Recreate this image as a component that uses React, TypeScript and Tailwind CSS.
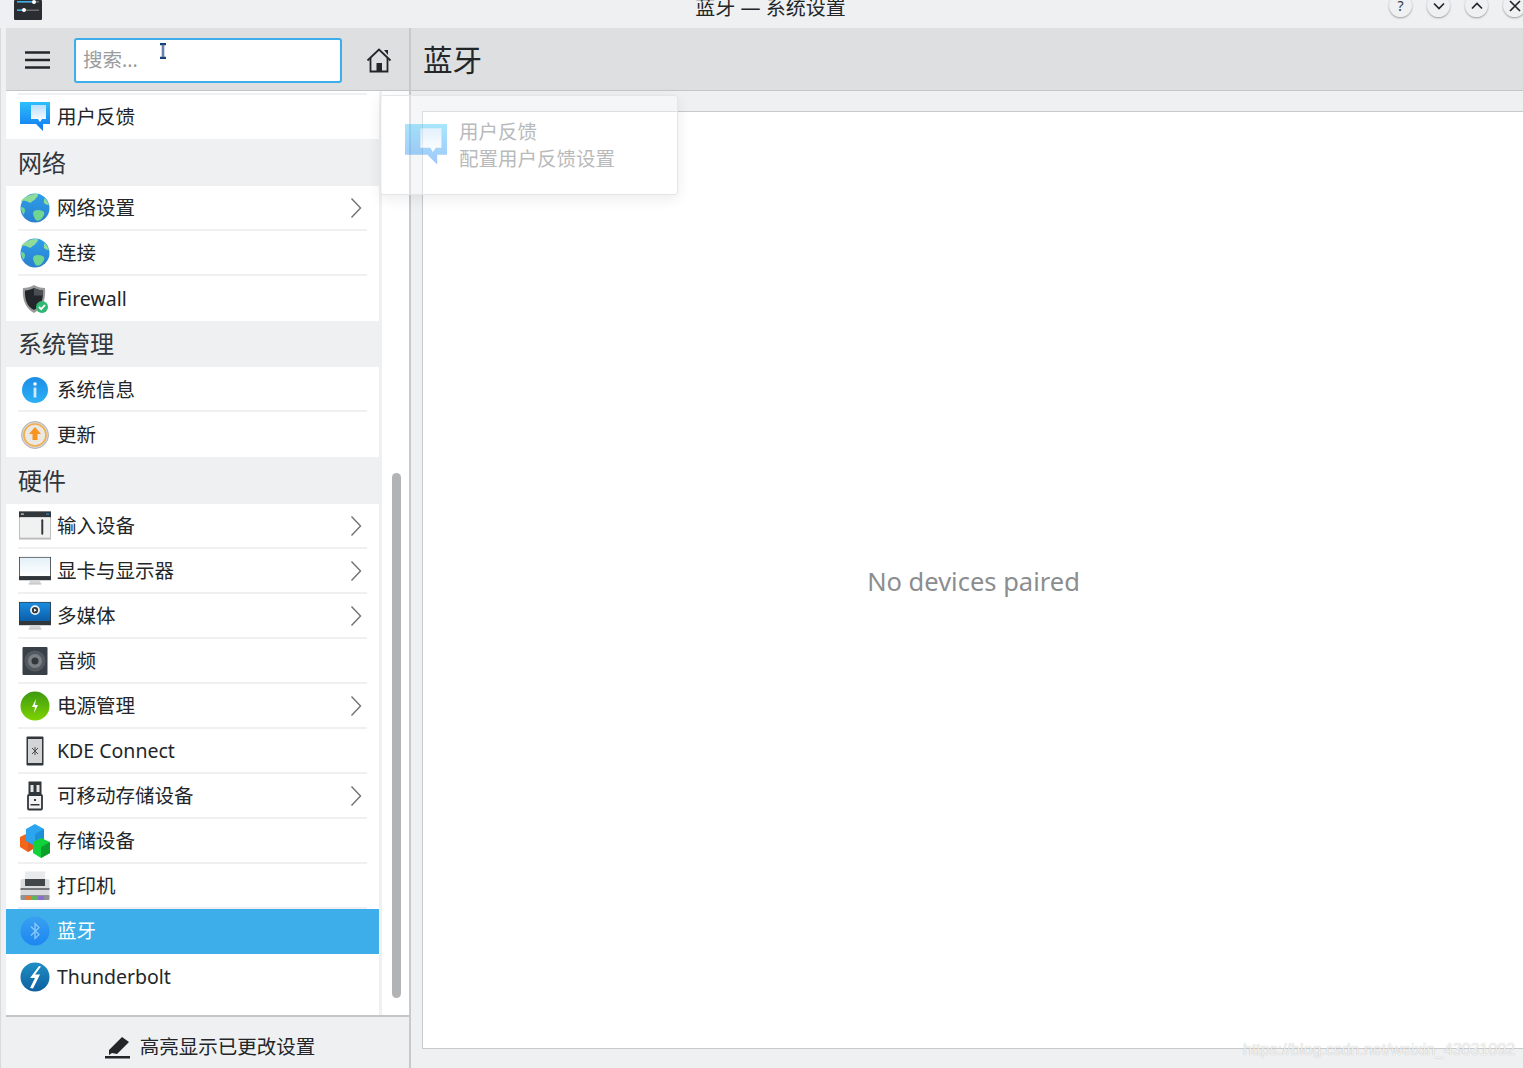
import { FC, ReactNode } from "react";

const font = { fontFamily: '"Noto Sans", "Noto Sans CJK SC", sans-serif' };

const GlobeIcon = () => (
  <svg width="30" height="30" viewBox="0 0 30 30">
    <defs>
      <linearGradient id="sea" x1="0" y1="0" x2="0" y2="1">
        <stop offset="0" stopColor="#2d9ee8" />
        <stop offset="1" stopColor="#2a7fd0" />
      </linearGradient>
    </defs>
    <circle cx="15" cy="15" r="14.5" fill="url(#sea)" />
    <path d="M7 3.5c3-2 8-3 11-2 .5 2-2 3-3 5-1 1.500-3 1-4 3-1.500 1-3-1-5-1.500-2-.5-4-.5-5 1C1.500 6 4 5 7 3.500z" fill="#8fdc9a" />
    <path d="M14 18c3-2 8-1 10 1 1 2-1 6-4 8-2 1-4 1-5-1-1-3-3-5-1-8z" fill="#6ed690" />
    <path d="M1 14c2 0 4 1 4 3s-1 3-1 5c-2-2-3-5-3-8z" fill="#6ed690" />
    <path d="M24 5c2 1 4 4 5 7-2 0-4-1-5-2-1-2 1-3 0-5z" fill="#8fdc9a" />
  </svg>
);

const FeedbackIcon = () => (
  <svg width="30" height="30" viewBox="0 0 30 30">
    <defs>
      <linearGradient id="fb" x1="0" y1="0" x2="0" y2="1">
        <stop offset="0" stopColor="#2bc0fb" />
        <stop offset="1" stopColor="#1277f0" />
      </linearGradient>
      <linearGradient id="fbi" x1="0" y1="0" x2="0" y2="1">
        <stop offset="0" stopColor="#b9ddfb" />
        <stop offset="1" stopColor="#ffffff" />
      </linearGradient>
    </defs>
    <path d="M0 0h30v22H23v7l-7-7H0z" fill="url(#fb)" />
    <path d="M11 3h15v14h-4l-2 3-2-3h-7z" fill="url(#fbi)" />
  </svg>
);

const ShieldIcon = () => (
  <svg width="30" height="30" viewBox="0 0 30 30">
    <path d="M14 1c3 2 7 3 11 3 1 11-2 20-11 25C5 24 2 15 3 4c4 0 8-1 11-3z" fill="#9a9a9a" />
    <path d="M14 4c3 1.500 6 2.500 9 2.500.5 9-2 16-9 19.500C7 22.500 4.500 15.500 5 6.500 8 6.500 11 5.500 14 4z" fill="#23272b" />
    <path d="M14 4c3 1.500 6 2.500 9 2.500l-.1 5H14z" fill="#4a4f54" />
    <circle cx="22" cy="23" r="6" fill="#2eb872" />
    <path d="M19 23l2.200 2.200L25 21" fill="none" stroke="#fff" strokeWidth="1.800" />
  </svg>
);

const InfoIcon = () => (
  <svg width="30" height="30" viewBox="0 0 30 30">
    <defs>
      <linearGradient id="inf" x1="0" y1="0" x2="0" y2="1">
        <stop offset="0" stopColor="#1c8ee8" />
        <stop offset="1" stopColor="#2cb0f5" />
      </linearGradient>
    </defs>
    <circle cx="15" cy="15" r="13" fill="url(#inf)" />
    <circle cx="15" cy="9" r="1.800" fill="#fff" />
    <rect x="13.600" y="12.500" width="2.800" height="10" rx="0.500" fill="#cfeafc" />
  </svg>
);

const UpdateIcon = () => (
  <svg width="30" height="30" viewBox="0 0 30 30">
    <circle cx="15" cy="15" r="13.500" fill="#d5d5d3" stroke="#b4b4b2" strokeWidth="1" />
    <circle cx="15" cy="15" r="11" fill="#e9e8e2" stroke="#f5ad4d" strokeWidth="1.600" />
    <path d="M15 7l6 7h-3.500v6h-5v-6H9z" fill="#f7931e" />
  </svg>
);

const TabletIcon = () => (
  <svg width="33" height="30" viewBox="0 0 33 30">
    <rect x="0" y="0" width="33" height="29" fill="#bcbcbc" />
    <rect x="0" y="0" width="33" height="6" fill="#31363b" />
    <rect x="2" y="2" width="3" height="1.500" fill="#b8bcc0" />
    <rect x="28" y="2" width="3" height="1.500" fill="#2a80c8" />
    <rect x="1" y="6" width="31" height="21" fill="#f0f1f1" />
    <rect x="23" y="8" width="2" height="16" rx="1" fill="#31363b" />
  </svg>
);

const MonitorIcon: FC<{ media?: boolean }> = ({ media }) => (
  <svg width="33" height="30" viewBox="0 0 33 30">
    <defs>
      <linearGradient id="scr" x1="0" y1="0" x2="0" y2="1">
        <stop offset="0" stopColor="#e3f0f7" />
        <stop offset="1" stopColor="#ffffff" />
      </linearGradient>
      <linearGradient id="scm" x1="0" y1="0" x2="0" y2="1">
        <stop offset="0" stopColor="#1a8de0" />
        <stop offset="1" stopColor="#0c5da8" />
      </linearGradient>
    </defs>
    <rect x="0" y="0.500" width="33" height="24" fill="#31363b" />
    <rect x="0.800" y="1.200" width="31.400" height="19" fill={media ? "url(#scm)" : "url(#scr)"} />
    <rect x="11" y="24.500" width="11" height="3" fill="#d5d6d7" />
    <rect x="10" y="27.500" width="13" height="1.500" fill="#c4c5c6" />
    {media && (
      <>
        <circle cx="16.500" cy="9" r="5" fill="#f3f4f5" />
        <circle cx="16.500" cy="9" r="3.200" fill="#31363b" />
        <path d="M15.500 7.300l2.800 1.700-2.800 1.700z" fill="#fff" />
      </>
    )}
  </svg>
);

const AudioIcon = () => (
  <svg width="30" height="30" viewBox="0 0 30 30">
    <rect x="2.500" y="1" width="25" height="28" rx="1" fill="#3a4047" />
    <circle cx="15" cy="15" r="10.500" fill="#54595f" />
    <circle cx="15" cy="15" r="7" fill="#7a7f84" />
    <circle cx="15" cy="15" r="3.500" fill="#33383d" />
  </svg>
);

const PowerIcon = () => (
  <svg width="30" height="30" viewBox="0 0 30 30">
    <defs>
      <linearGradient id="pw" x1="0" y1="0" x2="0" y2="1">
        <stop offset="0" stopColor="#3c9a10" />
        <stop offset="1" stopColor="#7fd300" />
      </linearGradient>
    </defs>
    <circle cx="15" cy="15" r="14.500" fill="url(#pw)" />
    <path d="M16 8l-4 8h3l-1 6 4-8h-3z" fill="#fff" />
  </svg>
);

const PhoneIcon = () => (
  <svg width="30" height="30" viewBox="0 0 30 30">
    <rect x="6.500" y="0.500" width="17" height="29" rx="1" fill="#31363b" />
    <rect x="8" y="3" width="14" height="24" fill="#d2d4d5" />
    <path d="M12 12l3 3-3 3M15 11v8M18 12l-3 3 3 3" fill="none" stroke="#4d4d4d" strokeWidth="1" />
  </svg>
);

const UsbIcon = () => (
  <svg width="30" height="30" viewBox="0 0 30 30">
    <rect x="8.500" y="0.500" width="13" height="14" fill="#31363b" />
    <rect x="10.500" y="4" width="3" height="7" fill="#e5e5e5" />
    <rect x="16.500" y="4" width="3" height="7" fill="#e5e5e5" />
    <rect x="8" y="14" width="14" height="14.500" rx="1" fill="#f2f2f2" stroke="#31363b" strokeWidth="1.800" />
    <rect x="14" y="18" width="2" height="2" fill="#31363b" />
    <rect x="10.500" y="23" width="9" height="1.500" fill="#31363b" />
  </svg>
);

const CubesIcon = () => (
  <svg width="30" height="34" viewBox="0 0 30 34">
    <path d="M8 9l8 4v10l-8 5-8-5V13z" fill="#f2661c" />
    <path d="M8 9l8 4v10l-8 5z" fill="#e4571a" />
    <path d="M6 5l9-5 9 5v12l-9 5-9-5z" fill="#2ba6ee" />
    <path d="M15 10l9-5v12l-9 5z" fill="#1c8fd8" />
    <path d="M13 18l8-4 9 4v11l-9 5-8-5z" fill="#12d23c" />
    <path d="M21 23l9-5v11l-9 5z" fill="#0ba02c" />
  </svg>
);

const PrinterIcon = () => (
  <svg width="30" height="30" viewBox="0 0 30 30">
    <rect x="5" y="0.500" width="20" height="11" fill="#e8eaeb" />
    <rect x="0.500" y="8" width="29" height="19" rx="2" fill="#d8dadb" />
    <rect x="5" y="8" width="20" height="7" fill="#41464b" />
    <rect x="0.500" y="17" width="29" height="2" fill="#74787b" />
    <rect x="0.500" y="24" width="29" height="5" rx="1" fill="#8f9396" />
    <rect x="6" y="25" width="6" height="4" fill="#e07a3c" />
    <rect x="12" y="25" width="6" height="4" fill="#5fb35a" />
    <rect x="18" y="25" width="6" height="4" fill="#8b6fd0" />
  </svg>
);

const BluetoothIcon = () => (
  <svg width="30" height="30" viewBox="0 0 30 30">
    <defs>
      <linearGradient id="bt" x1="0" y1="0" x2="0" y2="1">
        <stop offset="0" stopColor="#3aa0f0" />
        <stop offset="1" stopColor="#1c86f2" />
      </linearGradient>
    </defs>
    <circle cx="15" cy="15" r="14.500" fill="url(#bt)" />
    <path d="M11 10.500l8 8-4 4v-15l4 4-8 8" fill="none" stroke="#8cc8f8" strokeWidth="1.300" />
  </svg>
);

const BoltIcon = () => (
  <svg width="30" height="30" viewBox="0 0 30 30">
    <defs>
      <linearGradient id="tb" x1="0" y1="0" x2="0" y2="1">
        <stop offset="0" stopColor="#1f8fc4" />
        <stop offset="1" stopColor="#0e5fa0" />
      </linearGradient>
    </defs>
    <circle cx="15" cy="15" r="14.500" fill="url(#tb)" />
    <path d="M19 4l-9 12h5l-5 10 3 .5 7-14h-5l6-8z" fill="#fff" />
  </svg>
);

const Chevron = () => (
  <svg width="12" height="22" viewBox="0 0 12 22" className="shrink-0">
    <path d="M1.500 1.500L10.500 11L1.500 20.500" fill="none" stroke="#6f7275" strokeWidth="1.400" />
  </svg>
);

const GroupTitle: FC<{ title: string; height: string }> = ({ title, height }) => (
  <div className={`flex items-center pl-3 bg-[#eff0f2] text-[24px] text-[#31363b] ${height}`}>
    {title}
  </div>
);

const Row: FC<{
  icon: ReactNode;
  label: string;
  arrow?: boolean;
  last?: boolean;
  selected?: boolean;
  low?: boolean;
}> = ({ icon, label, arrow, last, selected, low }) => (
  <div className={`h-[45px] ${selected ? "bg-[#3daee9] text-white" : "text-[#232629]"}`}>
    <div
      className={`h-[45px] mx-3 flex items-center ${selected ? "pb-[2px]" : ""} ${low ? "pt-[2px]" : ""} ${
        last || selected ? "" : "border-b-2 border-[#eff0f2]"
      }`}
    >
      <span className="w-[32px] h-[34px] flex items-center justify-center shrink-0 ml-[1px] mr-[6px]">{icon}</span>
      <span className="flex-1 text-[19.5px] leading-none">{label}</span>
      {arrow && (
        <span className="mr-[5px] flex">
          <Chevron />
        </span>
      )}
    </div>
  </div>
);

export default function App() {
  return (
    <div className="w-[1523px] h-[1068px] relative overflow-hidden bg-[#eff0f2] flex flex-col" style={font}>
      {/* title bar, the top of it is cut off in the screenshot */}
      <div className="h-[28px] shrink-0 flex items-start justify-between relative">
        <svg width="28" height="20" viewBox="0 0 28 20" className="ml-[14px]">
          <rect width="28" height="20" rx="1" fill="#2a2e32" />
          <rect x="3" y="1" width="22" height="1.500" fill="#6a6e72" />
          <rect x="3" y="1" width="17" height="1.500" fill="#3daee9" />
          <circle cx="20" cy="2" r="2" fill="#fff" />
          <rect x="3" y="9.500" width="22" height="1.500" fill="#6a6e72" />
          <rect x="3" y="9.500" width="7" height="1.500" fill="#3daee9" />
          <circle cx="10" cy="10" r="2" fill="#fff" />
        </svg>
        <div className="flex-1 text-center text-[20px] leading-none text-[#232629] -mt-[2px] pl-[110px]">
          蓝牙 — 系统设置
        </div>
        <div className="flex gap-[15px] -mt-[6px] -mr-[3px]">
          <span className="w-[23px] h-[23px] rounded-full bg-[#eff0f2] shadow-[0_1px_2px_rgba(0,0,0,0.35)] flex items-center justify-center text-[14px] text-[#31363b]">
            ?
          </span>
          <span className="w-[23px] h-[23px] rounded-full bg-[#eff0f2] shadow-[0_1px_2px_rgba(0,0,0,0.35)] flex items-center justify-center">
            <svg width="12" height="8" viewBox="0 0 12 8">
              <path d="M1 1.500L6 6.500L11 1.500" fill="none" stroke="#232629" strokeWidth="1.700" />
            </svg>
          </span>
          <span className="w-[23px] h-[23px] rounded-full bg-[#eff0f2] shadow-[0_1px_2px_rgba(0,0,0,0.35)] flex items-center justify-center">
            <svg width="12" height="8" viewBox="0 0 12 8">
              <path d="M1 6.500L6 1.500L11 6.500" fill="none" stroke="#232629" strokeWidth="1.700" />
            </svg>
          </span>
          <span className="w-[23px] h-[23px] rounded-full bg-[#eff0f2] shadow-[0_1px_2px_rgba(0,0,0,0.35)] flex items-center justify-center">
            <svg width="12" height="12" viewBox="0 0 12 12">
              <path d="M1 1L11 11M11 1L1 11" fill="none" stroke="#232629" strokeWidth="1.700" />
            </svg>
          </span>
        </div>
      </div>

      <div className="flex-1 flex min-h-0 border-l border-[#d9dadc]">
        <div className="w-[5px] shrink-0" />

        {/* sidebar */}
        <div className="w-[403px] shrink-0 flex flex-col">
          <div className="h-[63px] shrink-0 flex items-center bg-[#dedfe1] border-b border-[#c4c5c7] pt-[2px]">
            <svg width="26" height="20" viewBox="0 0 26 20" className="ml-[19px]">
              <path d="M0 2.500h25M0 10h25M0 17.500h25" stroke="#232629" strokeWidth="2.600" />
            </svg>
            <div className="ml-[23px] w-[268px] h-[45px] rounded-[3px] border-2 border-[#3daee9] bg-white flex items-center pl-[7px] text-[19.5px] text-[#9a9c9e] relative">
              搜索...
              <svg width="8" height="16" viewBox="0 0 8 16" className="absolute left-[83px] top-[3px]">
                <path d="M1 1h6M1 15h6M4 1v14" stroke="#17427a" strokeWidth="2.400" fill="none" />
                <path d="M4 2v12" stroke="#ffffff" strokeWidth="0.700" fill="none" />
              </svg>
            </div>
            <svg width="26" height="26" viewBox="0 0 26 26" className="ml-[24px]">
              <path d="M1.500 13.500L13 2.500L24.500 13.500" fill="none" stroke="#232629" strokeWidth="1.800" />
              <path d="M4.500 11v13.500h17V11" fill="none" stroke="#232629" strokeWidth="1.800" />
              <rect x="10.500" y="16" width="5.500" height="8.500" fill="#232629" />
              <path d="M18 3h4v5z" fill="#232629" />
            </svg>
          </div>

          <div className="flex-1 flex min-h-0 bg-white">
            <div className="w-[373px] shrink-0">
              <div className="h-[48px] relative text-[#232629] flex items-center px-3">
                <div className="absolute left-3 right-3 top-[2px] h-[2px] bg-[#eff0f2]" />
                <span className="w-[32px] h-[34px] flex items-center justify-center shrink-0 ml-[1px] mr-[6px] mt-[4px]">
                  <FeedbackIcon />
                </span>
                <span className="text-[19.5px] leading-none mt-[3px]">用户反馈</span>
              </div>
              <GroupTitle title="网络" height="h-[47px]" />
              <Row icon={<GlobeIcon />} label="网络设置" arrow />
              <Row icon={<GlobeIcon />} label="连接" />
              <Row icon={<ShieldIcon />} label="Firewall" last />
              <GroupTitle title="系统管理" height="h-[46px]" />
              <Row icon={<InfoIcon />} label="系统信息" low />
              <Row icon={<UpdateIcon />} label="更新" last />
              <GroupTitle title="硬件" height="h-[47px]" />
              <Row icon={<TabletIcon />} label="输入设备" arrow />
              <Row icon={<MonitorIcon />} label="显卡与显示器" arrow />
              <Row icon={<MonitorIcon media />} label="多媒体" arrow />
              <Row icon={<AudioIcon />} label="音频" />
              <Row icon={<PowerIcon />} label="电源管理" arrow />
              <Row icon={<PhoneIcon />} label="KDE Connect" />
              <Row icon={<UsbIcon />} label="可移动存储设备" arrow />
              <Row icon={<CubesIcon />} label="存储设备" />
              <Row icon={<PrinterIcon />} label="打印机" />
              <Row icon={<BluetoothIcon />} label="蓝牙" selected />
              <Row icon={<BoltIcon />} label="Thunderbolt" last />
            </div>
            <div className="w-[3px] shrink-0 bg-[#eff0f2]" />
            <div className="flex-1 pt-[382px] pl-[10px]">
              <div className="w-[9px] h-[525px] rounded-full bg-[#b2b3b5]" />
            </div>
          </div>

          <div className="h-[53px] shrink-0 border-t-2 border-[#c4c5c7] flex items-center justify-center text-[19.5px] text-[#232629] pt-[8px] pl-[5px]">
            <svg width="26" height="24" viewBox="0 0 26 24" className="mr-[9px]">
              <path d="M4 15L17 2l7 5-12 12-5-1-3 2z" fill="#232629" />
              <rect x="0" y="21" width="25" height="2.500" fill="#232629" />
            </svg>
            高亮显示已更改设置
          </div>
        </div>

        {/* divider between sidebar and page */}
        <div className="w-[2px] shrink-0 bg-[#c8c9cb]" />

        {/* page */}
        <div className="flex-1 flex flex-col min-w-0">
          <div className="h-[63px] shrink-0 flex items-center pl-[12px] pt-[2px] bg-[#dedfe1] border-b border-[#c4c5c7] text-[29.5px] text-[#232629]">
            蓝牙
          </div>
          <div className="flex-1 flex flex-col pl-[11px] pt-[20px] pb-[19px]">
            <div className="flex-1 bg-white border border-[#c8c9cb] border-r-0 flex items-center justify-center text-[25.5px] text-[#8b8d8f] pl-[1px] pt-[2px]">
              No devices paired
            </div>
          </div>
        </div>
      </div>

      {/* tooltip fading out over the sidebar and the page */}
      <div className="absolute left-[380px] top-[95px] w-[298px] h-[100px] rounded-[3px] border border-[#e4e5e6] bg-white/40 shadow-[0_4px_14px_rgba(0,0,0,0.08)] flex items-start">
        <div className="opacity-40 ml-[24px] mt-[28px] scale-[1.4] origin-top-left">
          <FeedbackIcon />
        </div>
        <div className="ml-[24px] mt-[22px] text-[19.5px] leading-[27px] text-[#b9babb]">
          <div>用户反馈</div>
          <div>配置用户反馈设置</div>
        </div>
      </div>

      <div
        className="absolute left-[1243px] top-[1038px] text-[16px] text-white/80 whitespace-nowrap [text-shadow:0_0_1px_rgba(0,0,0,0.3)]"
        style={{ fontFamily: '"Liberation Sans", sans-serif' }}
      >
        https://blog.csdn.net/weixin_43031092
      </div>
    </div>
  );
}
